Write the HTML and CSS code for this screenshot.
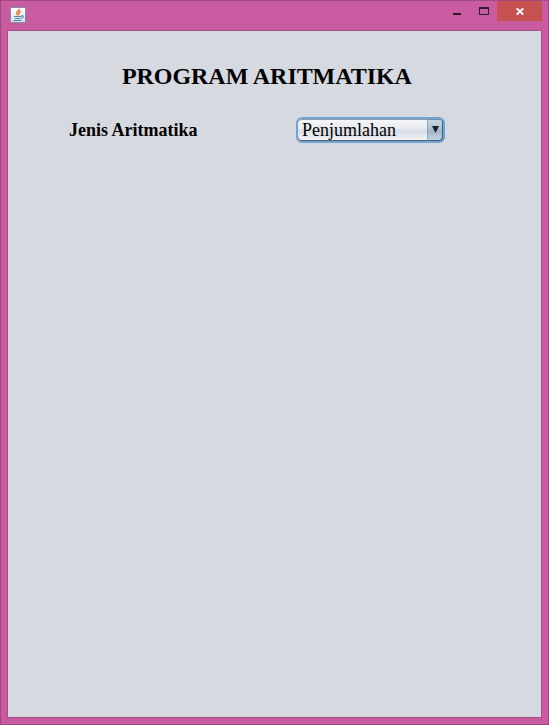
FILE: index.html
```html
<!DOCTYPE html>
<html lang="id">
<head>
<meta charset="utf-8">
<title>Program Aritmatika</title>
<link rel="stylesheet" href="styles.css">
</head>
<body>
<div class="window">
  <header class="titlebar">
    <svg class="app-icon" width="16" height="16" viewBox="0 0 16 16">
      <defs><linearGradient id="tile" x1="0" y1="0" x2="0" y2="1"><stop offset="0" stop-color="#ffffff"/><stop offset="1" stop-color="#d3dfe8"/></linearGradient></defs>
      <rect x=".5" y=".5" width="15" height="15" rx="1" fill="url(#tile)" stroke="#7e8ca5"/>
      <path d="M9.300 1.800C10 4 5.800 4.600 6.600 6.500L8 8.200M10.800 4.200C8.500 5 8.200 6 9.300 7.800" fill="none" stroke="#e5822f" stroke-width="1.500"/>
      <path d="M4 9.500H11M5 11.500H10.300M3.600 13.500H11.500M11 9C14 7.800 14 11 11 11.300" fill="none" stroke="#54809f" stroke-width="1.100"/>
    </svg>
    <div class="controls">
      <button class="control minimize" aria-label="Minimize"><svg width="8" height="2"><path d="M0 0h8v2H0z" fill="#2b2029"/></svg></button>
      <button class="control maximize" aria-label="Maximize"><svg width="10" height="8"><path fill-rule="evenodd" d="M0 0h10v8H0zM1 2v5h8V2z" fill="#2b2029"/></svg></button>
      <button class="control close" aria-label="Close"><svg width="8" height="7" viewBox="0 0 8 7"><path d="M.7.3 7.300 6.700M7.300.3.7 6.700" stroke="#fff" stroke-width="1.900"/></svg></button>
    </div>
  </header>
  <main class="content">
    <h1 class="title">PROGRAM ARITMATIKA</h1>
    <div class="field">
      <span class="label">Jenis Aritmatika</span>
      <div class="combo" role="combobox" aria-expanded="false" tabindex="0">
        <span class="value">Penjumlahan</span>
        <span class="arrow"><svg width="7" height="7"><path d="M0 0h7L3.500 7z" fill="#17202b"/></svg></span>
      </div>
    </div>
  </main>
</div>
</body>
</html>
```
FILE: styles.css
```css
* { box-sizing: border-box; }

body {
  margin: 0;
  font-family: "Liberation Serif", "Times New Roman", serif;
  color: #000;
}

.window {
  display: flex;
  flex-direction: column;
  width: 549px;
  height: 725px;
  padding: 0 6px 6px;
  background: #c95ca0;
  border: 1px solid #9f4a7f;
}

.titlebar {
  display: flex;
  justify-content: space-between;
  flex: 0 0 29px;
  padding-left: 3px;
}

.app-icon { margin-top: 6px; }

.controls { display: flex; height: 20px; }

.control {
  display: flex;
  justify-content: center;
  align-items: flex-start;
  width: 27px;
  padding: 0;
  border: 0;
  background: transparent;
}

.control svg { flex: none; }
.minimize { padding-top: 12px; }
.maximize { padding-top: 6px; }
.close { width: 45px; padding-top: 7px; background: #c75050; }

.content {
  flex: 1;
  padding: 30px 60px;
  background: #d6d9e0;
  border: 1px solid #a84e86;
}

.title {
  margin: 0 0 26px 54px;
  font-size: 24px;
  line-height: 30px;
  letter-spacing: -0.06px;
  font-weight: bold;
  white-space: nowrap;
}

.field { display: flex; align-items: center; }

.label {
  width: 228px;
  padding-left: 1px;
  font-size: 18px;
  line-height: 24px;
  font-weight: bold;
}

.combo {
  display: flex;
  width: 149px;
  height: 26px;
  border: 2px solid #73a4d1;
  border-radius: 6px;
  background: linear-gradient(#f7f8fa, #e6e9ee 45%, #d9dde4 55%, #f4f6f9);
  box-shadow: inset 0 -1px #4f6073, inset 0 1px #8b9bad;
}

.value {
  flex: 1;
  padding-left: 4px;
  font-size: 18px;
  line-height: 23px;
}

.arrow {
  display: flex;
  justify-content: center;
  width: 16px;
  padding-top: 7px;
  border-left: 1px solid #8ea5bb;
  border-radius: 0 4px 4px 0;
  background: linear-gradient(#c9d8e5, #adc0d1 45%, #a0b6c9 55%, #c6d9e9);
  box-shadow: inset -1px -1px #42617f, inset 0 1px #7890a8;
}
```
